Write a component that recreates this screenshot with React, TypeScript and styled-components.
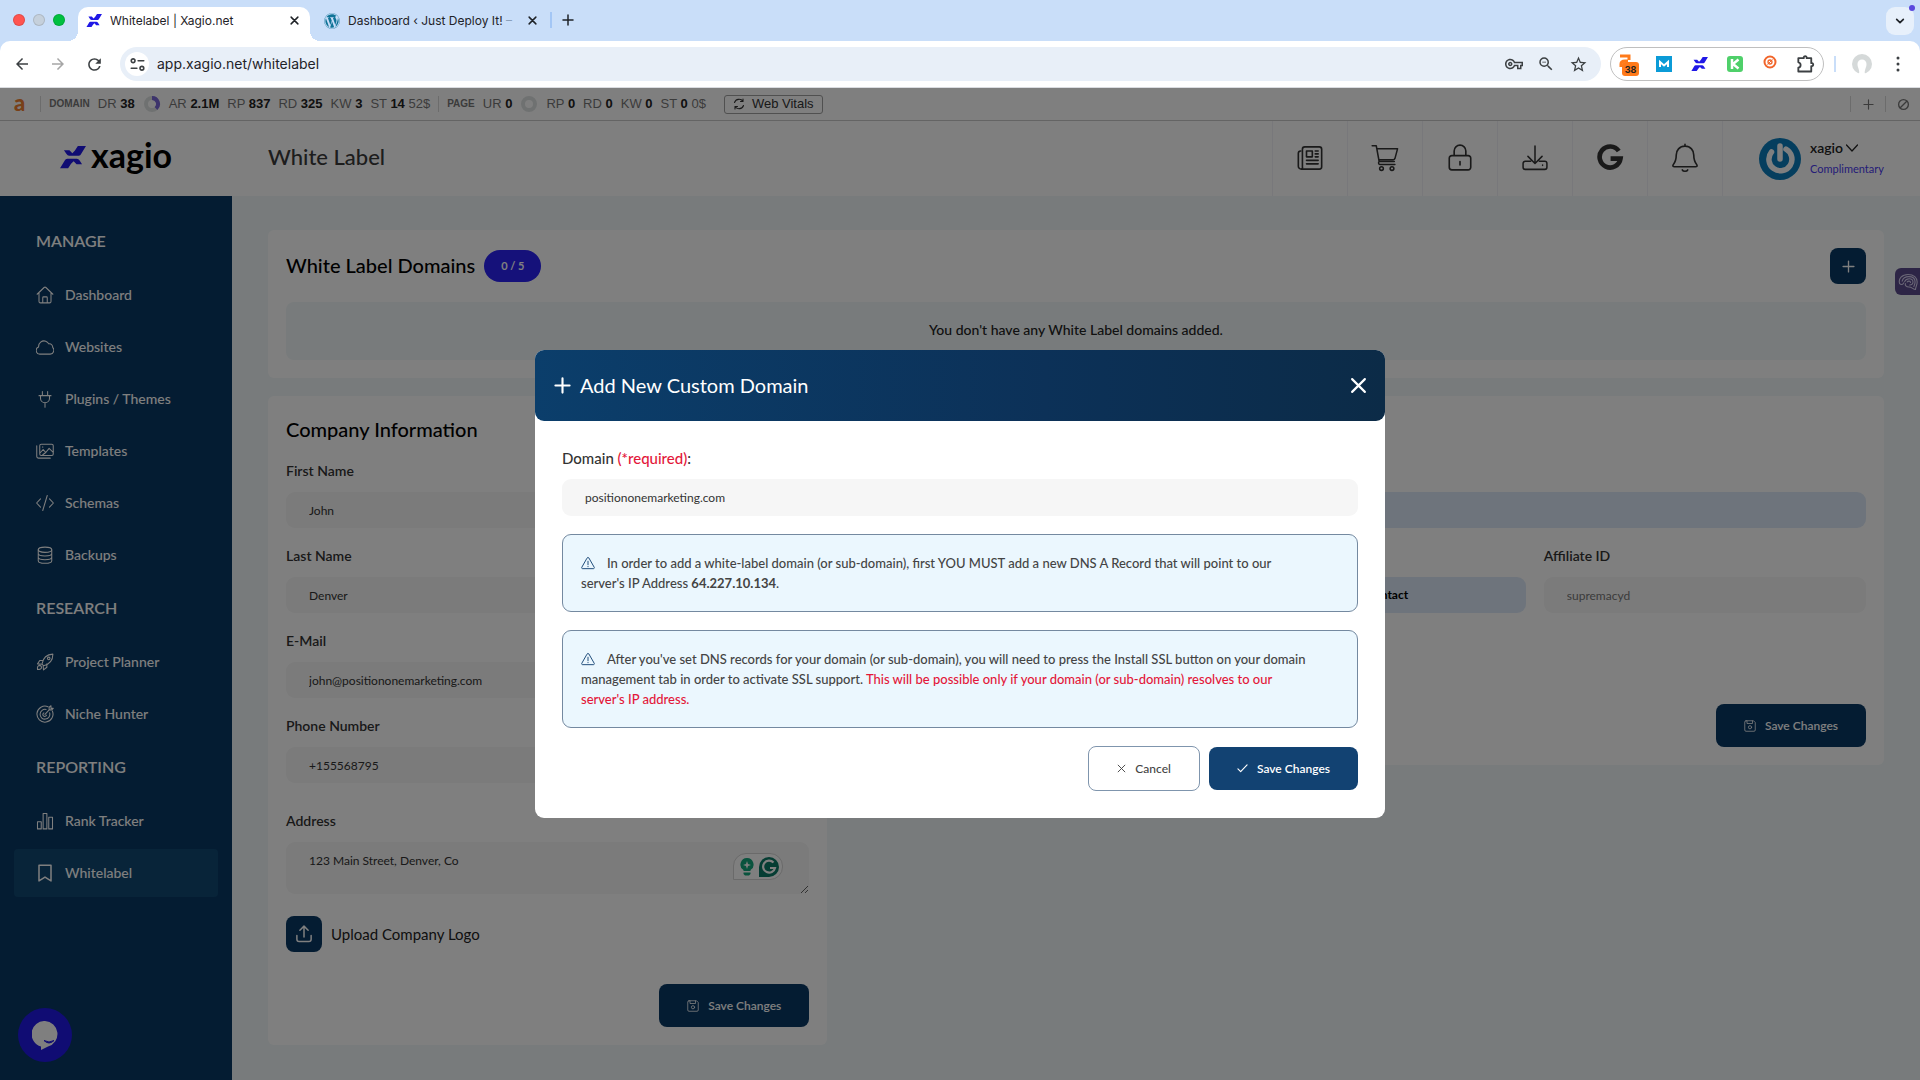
import React from 'react';
import styled, { createGlobalStyle, css } from 'styled-components';
import { FaWordpress } from 'react-icons/fa';
import { MdStarBorder, MdZoomOut, MdOutlineVpnKey, MdArrowBack, MdArrowForward, MdRefresh } from 'react-icons/md';

const sans = '"Lato", "Open Sans", sans-serif';
const ui = '"Inter", "Roboto", sans-serif';
const navy = '#093864';

const GlobalStyle = createGlobalStyle`
  *, *::before, *::after { box-sizing: border-box; }
  body { margin: 0; font-family: ${sans}; font-size: 14px; line-height: 20px; color: #333; background: #fff; }
  button, input, textarea { font: inherit; color: inherit; }
  button { cursor: pointer; padding: 0; border: 0; background: none; }
  a { color: inherit; text-decoration: none; }
  h1, h2, p { margin: 0; }
  svg { flex: none; display: block; }
`;

const Shell = styled.div`
  display: flex;
  flex-direction: column;
  min-height: 100vh;
`;

/* ---------- Browser chrome ---------- */

const TabStrip = styled.div`
  display: flex;
  align-items: flex-end;
  height: 41px;
  padding: 0 6px 0 13px;
  background: #c9def9;
  font-family: ${ui};
  font-size: 12px;
  color: #1f2328;
`;

const Lights = styled.div`
  display: flex;
  gap: 8px;
  height: 40px;
  align-items: center;
  align-self: flex-start;
  margin-right: 13px;
`;

const Light = styled.span<{ $color: string }>`
  width: 12px;
  height: 12px;
  border-radius: 50%;
  background: ${(p) => p.$color};
  box-shadow: inset 0 0 0 1px rgba(0, 0, 0, 0.12);
`;

const Tab = styled.div<{ $active?: boolean }>`
  position: relative;
  display: flex;
  align-items: center;
  gap: 8px;
  width: ${(p) => (p.$active ? '232px' : '240px')};
  height: 34px;
  padding: 0 8px 7px;
  ${(p) => (p.$active
    ? css`
        background: #fff;
        border-radius: 10px 10px 0 0;
        &::before, &::after {
          content: '';
          position: absolute;
          bottom: 0;
          width: 10px;
          height: 10px;
        }
        &::before { left: -10px; background: radial-gradient(circle at 0 0, transparent 10px, #fff 10px); }
        &::after { right: -10px; background: radial-gradient(circle at 100% 0, transparent 10px, #fff 10px); }
      `
    : css`padding-left: 14px; padding-right: 10px;`)}
`;

const TabTitle = styled.span`
  flex: 1;
  overflow: hidden;
  white-space: nowrap;
`;

const TabFade = styled.span`
  color: #8aa0bb;
`;

const TabDivider = styled.span`
  width: 2px;
  height: 16px;
  margin: 0 8px 13px 0;
  background: #a3c6f5;
`;

const IconButton = styled.button<{ $size?: number }>`
  display: grid;
  place-items: center;
  width: ${(p) => p.$size ?? 16}px;
  height: ${(p) => p.$size ?? 16}px;
`;

const NewTab = styled(IconButton)`
  margin-bottom: 13px;
`;

const TabSearch = styled.button`
  position: relative;
  display: grid;
  place-items: center;
  width: 28px;
  height: 28px;
  margin: 0 0 6px auto;
  border-radius: 9px;
  background: #e7f0fb;
  &::after {
    content: '';
    position: absolute;
    top: -2px;
    right: -1px;
    width: 6px;
    height: 6px;
    border-radius: 50%;
    background: #5a48dd;
  }
`;

const ToolbarWrap = styled.div`
  background: #c9def9;
`;

const Toolbar = styled.div`
  display: flex;
  align-items: center;
  height: 47px;
  padding: 0 12px;
  background: #fff;
  border-bottom: 1px solid #dadce0;
  border-radius: 10px 10px 0 0;
  color: #3c4043;
`;

const NavButtons = styled.div`
  display: flex;
  gap: 16px;
  margin-right: 16px;
`;

const AddressBar = styled.div`
  flex: 1;
  display: flex;
  align-items: center;
  height: 34px;
  padding: 0 13px 0 5px;
  border-radius: 17px;
  background: #e8eff8;
`;

const SiteInfo = styled.button`
  display: grid;
  place-items: center;
  width: 24px;
  height: 24px;
  margin-right: 8px;
  border-radius: 50%;
  background: #fff;
`;

const UrlInput = styled.input`
  flex: 1;
  padding: 0;
  border: 0;
  outline: 0;
  background: none;
  font: 14px/20px ${ui};
  color: #1f2328;
`;

const AddressActions = styled.div`
  display: flex;
  gap: 12px;
`;

const Extensions = styled.div`
  display: grid;
  grid-template-columns: repeat(6, 1fr);
  place-items: center;
  width: 214px;
  height: 34px;
  margin-left: 9px;
  border: 1px solid #bfbfbf;
  border-radius: 17px;
`;

const ChromeDivider = styled.span`
  width: 2px;
  height: 16px;
  margin: 0 16px 0 10px;
  background: #c9def9;
`;

const MoreButton = styled(IconButton)`
  margin-left: 16px;
`;

/* ---------- SEO bar ---------- */

const Page = styled.div`
  position: relative;
  flex: 1;
  display: flex;
  flex-direction: column;
`;

const SeoBar = styled.div`
  display: flex;
  align-items: center;
  gap: 8px;
  height: 33px;
  padding: 0 9px 0 14px;
  border-bottom: 1px solid #c8c8c8;
  background: #fff;
  font-family: "Liberation Sans", Arial, sans-serif;
  font-size: 13px;
  color: #777;
  b { color: #222; }
`;

const SeoMark = styled.b`
  && { color: #f08030; }
  font: 900 22px/20px ${sans};
  padding: 0 7px 3px 0;
`;

const SeoDivider = styled.span`
  width: 1px;
  height: 16px;
  background: #d8d8d8;
`;

const SeoCaption = styled.span`
  font-size: 10px;
  font-weight: 700;
`;

const Metric = styled.span`
  white-space: nowrap;
`;

const VitalsButton = styled.button`
  display: flex;
  align-items: center;
  gap: 7px;
  height: 19px;
  margin-left: 10px;
  padding: 0 8px;
  border: 1px solid #a0a0a0;
  border-radius: 3px;
  color: #333;
`;

const SeoTools = styled.div`
  display: flex;
  align-items: center;
  gap: 9px;
  margin-left: auto;
`;

/* ---------- App header ---------- */

const Header = styled.header`
  display: flex;
  height: 75px;
  background: #fff;
`;

const Logo = styled.a`
  display: flex;
  align-items: center;
  gap: 5px;
  width: 232px;
  padding: 0 0 8px 60px;
  font-size: 34px;
  font-weight: 700;
  line-height: 40px;
  color: #000;
`;

const LogoMark = styled.span`
  padding-top: 6px;
`;

const PageTitle = styled.h1`
  flex: 1;
  padding: 23px 0 0 36px;
  font-size: 22px;
  font-weight: 500;
  line-height: 26px;
  color: #3a3a3a;
`;

const HeaderCell = styled.button`
  display: grid;
  place-items: center;
  width: 75px;
  padding-bottom: 2px;
  border-left: 1px solid #f0f0f6;
  color: #333;
`;

const Account = styled.button`
  display: flex;
  align-items: center;
  gap: 9px;
  width: 198px;
  padding-left: 36px;
  border-left: 1px solid #f0f0f6;
  text-align: left;
`;

const AccountName = styled.span`
  display: flex;
  align-items: center;
  gap: 3px;
  font-size: 14px;
  font-weight: 600;
  color: #222;
`;

const AccountPlan = styled.span`
  font-size: 11px;
  color: #4a3aef;
`;

/* ---------- Layout ---------- */

const Body = styled.div`
  flex: 1;
  display: flex;
  background: #f0f7f8;
`;

const Sidebar = styled.nav`
  flex: none;
  width: 232px;
  padding: 16px 14px 0;
  background: ${navy};
  color: #fff;
`;

const NavTitle = styled.div`
  height: 59px;
  padding: 19px 22px 0;
  font-size: 16px;
  font-weight: 600;
`;

const NavList = styled.div`
  display: flex;
  flex-direction: column;
  gap: 4px;
`;

const NavItem = styled.a<{ $active?: boolean }>`
  display: flex;
  align-items: center;
  gap: 11px;
  height: 48px;
  padding: 0 22px;
  border-radius: 4px;
  font-weight: 500;
  background: ${(p) => (p.$active ? '#104873' : 'none')};
`;

const Main = styled.main`
  flex: 1;
  display: flex;
  flex-direction: column;
  gap: 18px;
  padding: 34px 36px;
`;

const Card = styled.section`
  padding: 18px;
  border-radius: 6px;
  background: #fff;
`;

const CardHeader = styled.div`
  display: flex;
  align-items: center;
  gap: 9px;
  margin-bottom: 18px;
`;

const Heading = styled.h2`
  padding-bottom: 2px;
  font-size: 20px;
  font-weight: 500;
  line-height: 30px;
  color: #000;
`;

const CountBadge = styled.span`
  padding: 6px 17px;
  border-radius: 16px;
  background: #2a22f4;
  font-size: 11px;
  font-weight: 700;
  color: #fff;
`;

const SquareButton = styled.button<{ $end?: boolean }>`
  display: grid;
  place-items: center;
  width: 36px;
  height: 36px;
  margin-left: ${(p) => (p.$end ? 'auto' : '0')};
  border-radius: 8px;
  background: ${navy};
  color: #fff;
`;

const EmptyNotice = styled.p`
  padding: 18px 18px 20px;
  border-radius: 8px;
  background: #f0f7f8;
  text-align: center;
  font-weight: 500;
  color: #222;
`;

const Columns = styled.div`
  display: grid;
  grid-template-columns: 7fr 13fr;
  align-items: start;
  gap: 18px;
`;

const Form = styled.form`
  display: grid;
  gap: 18px;
  margin-top: 15px;
`;

const AffiliateForm = styled.form`
  display: grid;
  gap: 18px;
  padding-top: 78px;
`;

const Field = styled.div<{ $spaced?: boolean }>`
  position: relative;
  display: grid;
  gap: 11px;
  margin-top: ${(p) => (p.$spaced ? '10px' : '0')};
`;

const Label = styled.label`
  font-weight: 600;
  color: #333;
`;

const inputStyle = css`
  width: 100%;
  padding: 0 22px 0 23px;
  border: 0;
  outline: 0;
  border-radius: 9px;
  background: #f6f6f6;
  font-size: 12px;
  color: #333;
`;

const TextInput = styled.input<{ $tint?: boolean; $muted?: boolean; $tall?: boolean }>`
  ${inputStyle}
  height: ${(p) => (p.$tall ? '37px' : '36px')};
  ${(p) => p.$tint && css`background: #dde9f8;`}
  ${(p) => p.$muted && css`color: #777;`}
`;

const TextArea = styled.textarea`
  ${inputStyle}
  display: block;
  height: 52px;
  padding-top: 9px;
`;

const WritingTools = styled.div`
  position: absolute;
  right: 26px;
  bottom: 14px;
  display: flex;
  align-items: center;
  gap: 5px;
  height: 27px;
  padding: 0 3px 0 6px;
  border: 1px solid #d4d4d4;
  border-radius: 13px 13px 13px 0;
  background: #fff;
`;

const ToggleButton = styled.button`
  height: 36px;
  border-radius: 9px;
  background: #dde9f8;
  font-size: 12px;
  font-weight: 700;
  color: #000;
`;

const Thirds = styled.div`
  display: grid;
  grid-template-columns: repeat(3, 1fr);
  align-items: end;
  gap: 18px;
`;

const UploadRow = styled.div`
  display: flex;
  align-items: center;
  gap: 9px;
  margin-top: 4px;
  font-size: 15px;
  color: #222;
`;

const Actions = styled.div<{ $top: number }>`
  display: flex;
  justify-content: flex-end;
  align-items: center;
  gap: 9px;
  margin-top: ${(p) => p.$top}px;
`;

const ActionButton = styled.button<{ $variant?: 'outline' | 'bright' }>`
  display: flex;
  align-items: center;
  gap: 9px;
  height: 43px;
  padding: 0 28px;
  border-radius: 8px;
  background: ${(p) => (p.$variant === 'bright' ? '#124272' : navy)};
  font-size: 12px;
  font-weight: 600;
  color: #fff;
  ${(p) => p.$variant === 'outline' && css`
    height: 45px;
    border: 1px solid #7f95ad;
    background: #fff;
    font-weight: 500;
    color: #444;
  `}
`;

const ChatButton = styled.button`
  position: absolute;
  left: 18px;
  bottom: 18px;
  display: grid;
  place-items: center;
  width: 54px;
  height: 54px;
  border-radius: 50%;
  background: #2018e6;
`;

const SideTab = styled.button`
  position: absolute;
  top: 180px;
  right: 0;
  display: grid;
  place-items: center;
  width: 25px;
  height: 27px;
  border-radius: 6px 0 0 6px;
  background: #5b4a8c;
`;

/* ---------- Modal ---------- */

const Backdrop = styled.div`
  position: absolute;
  inset: 0;
  display: grid;
  place-items: center;
  background: rgba(0, 0, 0, 0.5);
`;

const Dialog = styled.div`
  width: 850px;
  max-width: 90%;
  border-radius: 9px;
  background: #fff;
`;

const DialogHeader = styled.div`
  display: flex;
  align-items: center;
  gap: 9px;
  height: 71px;
  padding: 0 19px 1px 19px;
  border-radius: 9px;
  background: linear-gradient(90deg, #0b3e6b, #0c3158 60%, #0c2b47);
  color: #fff;
`;

const DialogTitle = styled.h2`
  flex: 1;
  font-size: 20px;
  font-weight: 400;
  line-height: 26px;
`;

const DialogBody = styled.form`
  display: grid;
  gap: 18px;
  padding: 27px;
`;

const DialogLabel = styled(Label)`
  font-size: 15px;
  font-weight: 500;
`;

const Danger = styled.span`
  color: #e3173a;
`;

const Alert = styled.p`
  padding: 18px 48px 18px 18px;
  border: 1px solid #7489a0;
  border-radius: 9px;
  background: #ebf7fe;
  font-size: 13px;
  font-weight: 500;
  color: #444;
  svg { display: inline-block; margin-right: 12px; vertical-align: -2px; }
`;

/* ---------- Icons ---------- */

type LineProps = { size?: number; w?: number; color?: string; children: React.ReactNode };
const Line = ({ size = 18, w = 1.3, color = 'currentColor', children }: LineProps) => (
  <svg width={size} height={size} viewBox="0 0 24 24" fill="none" stroke={color} strokeWidth={w} strokeLinecap="round" strokeLinejoin="round" aria-hidden="true">
    {children}
  </svg>
);

const Mark = ({ size = 27 }: { size?: number }) => (
  <svg width={size} height={size * 0.86} viewBox="28 44 80 69" fill="#2018e6" aria-hidden="true">
    <path d="M40 57H57L66 66L74 58L83 44H108L93 69Q91 74 86 74H56Q51 74 48 69Z" />
    <path d="M96 100H79L70 91L62 99L53 113H28L43 88Q45 83 50 83H80Q85 83 88 88Z" />
  </svg>
);

const Plus = ({ size, w }: { size: number; w: number }) => <Line size={size} w={w}><path d="M12 2V22M2 12H22" /></Line>;
const Cross = ({ size, w }: { size: number; w: number }) => <Line size={size} w={w}><path d="M3 3L21 21M21 3L3 21" /></Line>;

const Warning = () => (
  <Line size={14} w={1.6} color="#124272">
    <path d="M10.6 3.2a1.7 1.7 0 0 1 2.8 0l9.3 16.2a1.5 1.5 0 0 1-1.3 2.3H2.6a1.5 1.5 0 0 1-1.3-2.3ZM12 9V15M12 18V18.4" />
  </Line>
);

const SaveIcon = () => (
  <Line size={12} w={1.6}>
    <path d="M4 1.5H19L22.5 5V20a2.5 2.5 0 0 1-2.5 2.5H4A2.5 2.5 0 0 1 1.5 20V4A2.5 2.5 0 0 1 4 1.5ZM6 2V7H17V2" />
    <circle cx="12" cy="14.5" r="3.2" />
  </Line>
);

const navIcons: Record<string, React.ReactNode> = {
  Dashboard: <path d="M1.5 11L10.8 2a1.8 1.8 0 0 1 2.4 0L22.5 11M4 9V20.5A2 2 0 0 0 6 22.5H18A2 2 0 0 0 20 20.5V9M9 22V15.5A1 1 0 0 1 10 14.5H14A1 1 0 0 1 15 15.5V22" />,
  Websites: <path d="M5 21.5C-1 21.5-1 13 3.500 12C3 7 8 2.500 13 4.200C15 5 16.300 6.300 17 7.800C21 7.500 22.500 10.500 22.300 12.800C25 15 24 21.500 19 21.500Z" />,
  'Plugins / Themes': <path d="M8.5 2V7M15.5 2V7M4 7.5H20M6 7.5V11A6 6 0 0 0 18 11V7.5M12 17V23" />,
  Templates: <path d="M7 3H21A2 2 0 0 1 23 5V16A2 2 0 0 1 21 18H7A2 2 0 0 1 5 16V5A2 2 0 0 1 7 3ZM1 5V19A2.5 2.5 0 0 0 3.5 21.5H19M5 15L9.5 10L13 14L17.5 8.5L23 14M9 17L13 14M9 6.5V7" />,
  Schemas: <path d="M6 6.5L0.8 12L6 17.5M18 6.5L23.2 12L18 17.5M15 2L9 22" />,
  Backups: <><ellipse cx="12" cy="5" rx="9" ry="3.5" /><path d="M3 5V19.5C3 21.5 7 23 12 23S21 21.5 21 19.5V5M3 10C3 12 7 13.3 12 13.3S21 12 21 10M3 15C3 17 7 18.3 12 18.3S21 17 21 15" /></>,
  'Project Planner': <path d="M8 14.5C9 9 13 2 22.5 1.5C22.5 11 15.5 15.5 10 17ZM9.5 10H5L2 14.5L7.5 15M14.5 14.5V19L10 22.5L9.5 17M2 22C1.5 19 2.5 16.5 5 16.5C8 17 8 20 6 21.3C4.5 22 3 22 2 22M17 5.5A1.7 1.7 0 1 1 16.9 5.5Z" />,
  'Niche Hunter': <path d="M16 2.3A10.7 10.7 0 1 0 21.8 8M13.5 6A6.5 6.5 0 1 0 18.2 10.5M12 12.5L17.5 6.5M17.5 6.5V3L20 1V4.5H23L21 6.5ZM10.5 10.5A2.5 2.5 0 1 0 14 13.5" />,
  'Rank Tracker': <path d="M2 13H7V22.5H2ZM9.5 2H14.5V22.5H9.5ZM17 7H22V22.5H17Z" />,
  Whitelabel: <path d="M4 1.5H20V22.5L12 17.5L4 22.5Z" />,
};

const headerItems: { label: string; icon: React.ReactNode }[] = [
  { label: 'News', icon: <Line size={28} w={1.4}><path d="M7.5 2.5H20A2 2 0 0 1 22 4.5V19.5A2 2 0 0 1 20 21.5H4.5A2.5 2.5 0 0 1 2 19V8A2 2 0 0 1 4 6M5.5 19.5V4.5A2 2 0 0 1 7.5 2.5M5.5 19.5A1.5 1.5 0 0 1 4.5 21.5M9 6H14V11H9ZM16.5 6H19M16.5 8.5H19M16.5 11H19M9 14H19M9 17H19" /></Line> },
  { label: 'Cart', icon: <Line size={28} w={1.3}><path d="M1 1.5H4.5L7 15H20M5.2 4H22.8L20.5 12.5Q20.2 13.5 19 13.5H6.7M7 15C6 16 6.5 17.5 8 17.5H20.5" /><circle cx="9" cy="21" r="1.6" /><circle cx="18" cy="21" r="1.6" /></Line> },
  { label: 'Security', icon: <Line size={28} w={1.4}><path d="M5 10H19A2.2 2.2 0 0 1 21.2 12.2V20A2.2 2.2 0 0 1 19 22.2H5A2.2 2.2 0 0 1 2.8 20V12.2A2.2 2.2 0 0 1 5 10ZM7 10V6A5 5 0 0 1 17 6V10M12 15V18" /></Line> },
  { label: 'Downloads', icon: <Line size={26} w={1.4}><path d="M12 1V16.5M5.5 10.5L12 17L18.5 10.5M8 15H3A2 2 0 0 0 1 17V20.500A2 2 0 0 0 3 22.500H21A2 2 0 0 0 23 20.500V17A2 2 0 0 0 21 15H16M19 18.500V18.800" /></Line> },
  { label: 'Google', icon: <Line size={28} w={4}><path d="M19.5 6A9 9 0 1 0 21 12.5H12.5" strokeLinecap="butt" strokeLinejoin="miter" /></Line> },
  { label: 'Notifications', icon: <Line size={30} w={1.3}><path d="M12 1V2.5M12 2.5C7.5 2.5 5 6 5 9.5C5 14 4 15.5 2.5 17.5C2 18.5 2.5 19 3.5 19H20.5C21.5 19 22 18.5 21.5 17.5C20 15.5 19 14 19 9.5C19 6 16.5 2.5 12 2.5ZM9.8 21.5C10.5 23 13.5 23 14.2 21.5" /></Line> },
];

const navGroups = [
  { title: 'MANAGE', items: ['Dashboard', 'Websites', 'Plugins / Themes', 'Templates', 'Schemas', 'Backups'] },
  { title: 'RESEARCH', items: ['Project Planner', 'Niche Hunter'] },
  { title: 'REPORTING', items: ['Rank Tracker', 'Whitelabel'] },
];

const companyFields = [
  { id: 'first-name', label: 'First Name', value: 'John' },
  { id: 'last-name', label: 'Last Name', value: 'Denver' },
  { id: 'email', label: 'E-Mail', value: 'john@positiononemarketing.com' },
  { id: 'phone', label: 'Phone Number', value: '+155568795' },
];

const domainMetrics: [string, string, string?][] = [['AR', '2.1M'], ['RP', '837'], ['RD', '325'], ['KW', '3'], ['ST', '14', '52$']];
const pageMetrics: [string, string, string?][] = [['RP', '0'], ['RD', '0'], ['KW', '0'], ['ST', '0', '0$']];

const Donut = ({ filled }: { filled?: boolean }) => (
  <svg width="18" height="16" viewBox="0 0 18 16" fill="none" strokeWidth="4" aria-hidden="true">
    <circle cx="9" cy="8" r="6" stroke="#dfe3e3" />
    {filled && <path d="M9 2A6 6 0 0 1 13 12.5" stroke="#7a68d8" />}
  </svg>
);

const MetricText = ({ data: [name, value, extra] }: { data: [string, string, string?] }) => (
  <Metric>{name} <b>{value}</b>{extra ? ` ${extra}` : ''}</Metric>
);

/* ---------- Sections ---------- */

const BrowserChrome = () => (
  <>
    <TabStrip>
      <Lights><Light $color="#ff5450" /><Light $color="#c5d0dc" /><Light $color="#00c040" /></Lights>
      <Tab $active>
        <Mark size={16} />
        <TabTitle>Whitelabel | Xagio.net</TabTitle>
        <IconButton aria-label="Close tab"><Cross size={9} w={4} /></IconButton>
      </Tab>
      <Tab>
        <FaWordpress size={16} color="#0f7397" />
        <TabTitle>Dashboard ‹ Just Deploy It! <TabFade>–</TabFade></TabTitle>
        <IconButton aria-label="Close tab"><Cross size={9} w={4} /></IconButton>
      </Tab>
      <TabDivider />
      <NewTab aria-label="New tab"><Plus size={12} w={3} /></NewTab>
      <TabSearch aria-label="Search tabs"><Line size={10} w={4}><path d="M4 8L12 16L20 8" /></Line></TabSearch>
    </TabStrip>
    <ToolbarWrap>
      <Toolbar>
        <NavButtons>
          <IconButton $size={20} aria-label="Back"><MdArrowBack size={18} /></IconButton>
          <IconButton $size={20} aria-label="Forward"><MdArrowForward size={18} color="#a6a6a6" /></IconButton>
          <IconButton $size={20} aria-label="Reload"><MdRefresh size={19} /></IconButton>
        </NavButtons>
        <AddressBar>
          <SiteInfo aria-label="Site information">
            <Line size={15} w={2.6}><circle cx="5" cy="6" r="3" /><path d="M13 6H22M2 18H11" /><circle cx="19" cy="18" r="3" /></Line>
          </SiteInfo>
          <UrlInput aria-label="Address" defaultValue="app.xagio.net/whitelabel" />
          <AddressActions>
            <IconButton $size={20} aria-label="Passwords"><MdOutlineVpnKey size={18} /></IconButton>
            <IconButton $size={20} aria-label="Zoom"><MdZoomOut size={18} /></IconButton>
            <IconButton $size={20} aria-label="Bookmark"><MdStarBorder size={19} /></IconButton>
          </AddressActions>
        </AddressBar>
        <Extensions>
          <svg width="20" height="24" viewBox="0 0 20 24" aria-hidden="true">
            <path d="M1 4H10V8M2 15V12Q2 9 6 9H9" fill="none" stroke="#ff7a1a" strokeWidth="3" />
            <rect x="3" y="10" width="17" height="14" rx="3" fill="#ff7a1a" />
            <text x="11.500" y="20.500" textAnchor="middle" fontFamily="Inter" fontSize="9" fontWeight="700" fill="#222">38</text>
          </svg>
          <svg width="16" height="16" viewBox="0 0 16 16" aria-hidden="true"><rect width="16" height="16" fill="#0b9bd7" /><path d="M4 11V6L8 9.5L12 6V11" fill="none" stroke="#fff" strokeWidth="2" /></svg>
          <Mark size={17} />
          <svg width="16" height="16" viewBox="0 0 16 16" aria-hidden="true"><rect width="16" height="16" rx="3" fill="#4fd06a" /><path d="M5 3V13M11.5 3.5L6 8L11.5 12.5" fill="none" stroke="#fff" strokeWidth="2.5" /></svg>
          <svg width="14" height="18" viewBox="0 0 14 18" fill="none" stroke="#f1652a" aria-hidden="true"><circle cx="7" cy="7" r="5.5" strokeWidth="2" /><circle cx="7" cy="7" r="2" strokeWidth="1.3" /><path d="M4.5 9.5L9.5 4.5" /></svg>
          <Line size={20} w={2.2}><path d="M4 5H10.5V4A1.800 1.800 0 0 1 14 4V5H19.500V11H20.500A1.800 1.800 0 0 1 20.500 14.500H19.500V21H4V16.500A3.300 3.300 0 0 0 4 10Z" /></Line>
        </Extensions>
        <ChromeDivider />
        <svg width="20" height="20" viewBox="0 0 20 20" aria-hidden="true"><circle cx="10" cy="10" r="10" fill="#d5d9d9" /><path d="M7 20C8 16 5.5 14 5.5 10A4.5 4.5 0 0 1 14.5 10C14.5 14 12 16 13 20Z" fill="#fff" /></svg>
        <MoreButton $size={20} aria-label="Menu"><svg width="4" height="16" viewBox="0 0 4 16" fill="#3c4043"><circle cx="2" cy="2" r="1.5" /><circle cx="2" cy="8" r="1.5" /><circle cx="2" cy="14" r="1.5" /></svg></MoreButton>
      </Toolbar>
    </ToolbarWrap>
  </>
);

const SeoToolbar = () => (
  <SeoBar>
    <SeoMark>a</SeoMark>
    <SeoDivider />
    <SeoCaption>DOMAIN</SeoCaption>
    <MetricText data={['DR', '38']} />
    <Donut filled />
    {domainMetrics.map((m) => <MetricText key={m[0]} data={m} />)}
    <SeoDivider />
    <SeoCaption>PAGE</SeoCaption>
    <MetricText data={['UR', '0']} />
    <Donut />
    {pageMetrics.map((m) => <MetricText key={m[0]} data={m} />)}
    <VitalsButton><Line size={12} w={2.2}><path d="M20 7A9.5 9.5 0 0 0 3 9M4 17A9.5 9.5 0 0 0 21 15M20 2V7H15M4 22V17H9" /></Line>Web Vitals</VitalsButton>
    <SeoTools>
      <SeoDivider />
      <IconButton aria-label="Add"><Plus size={11} w={2.5} /></IconButton>
      <SeoDivider />
      <IconButton aria-label="Disable"><Line size={13} w={2.5}><circle cx="12" cy="12" r="9" /><path d="M6 18L18 6" /></Line></IconButton>
    </SeoTools>
  </SeoBar>
);

const AppHeader = () => (
  <Header>
    <Logo href="#"><LogoMark><Mark size={26} /></LogoMark>xagio</Logo>
    <PageTitle>White Label</PageTitle>
    {headerItems.map((item) => <HeaderCell key={item.label} aria-label={item.label}>{item.icon}</HeaderCell>)}
    <Account>
      <svg width="42" height="42" viewBox="0 0 42 42" fill="none" aria-hidden="true">
        <circle cx="21" cy="21" r="21" fill="#0a7dbd" />
        <path d="M12.5 14A11.5 11.5 0 1 0 27 11.2M21 8V21" stroke="#fff" strokeWidth="5.5" strokeLinecap="round" />
      </svg>
      <span>
        <AccountName>xagio <Line size={12} w={2.5}><path d="M1 6L12 18L23 6" /></Line></AccountName>
        <AccountPlan>Complimentary</AccountPlan>
      </span>
    </Account>
  </Header>
);

const SaveButton = () => <ActionButton type="button"><SaveIcon />Save Changes</ActionButton>;

const CompanyCard = () => (
  <Card>
    <Heading>Company Information</Heading>
    <Form>
      {companyFields.map((f) => (
        <Field key={f.id}>
          <Label htmlFor={f.id}>{f.label}</Label>
          <TextInput id={f.id} defaultValue={f.value} />
        </Field>
      ))}
      <Field $spaced>
        <Label htmlFor="address">Address</Label>
        <TextArea id="address" defaultValue="123 Main Street, Denver, Co" />
        <WritingTools>
          <svg width="14" height="18" viewBox="0 0 14 18" aria-hidden="true"><path d="M7 0A6.5 6.5 0 0 1 10.5 12V13H3.5V12A6.5 6.5 0 0 1 7 0ZM3.5 14.5H10.5V16L9 17.5H5L3.5 16Z" fill="#12a67c" /><path d="M7 3L8 6L11 7L8 8L7 11L6 8L3 7L6 6Z" fill="#fff" /></svg>
          <svg width="20" height="20" viewBox="0 0 20 20" aria-hidden="true"><path d="M10 0A10 10 0 1 1 10 20H0V10A10 10 0 0 1 10 0Z" fill="#0b7a66" /><path d="M14.5 5.5A6 6 0 1 0 16 11H11" fill="none" stroke="#fff" strokeWidth="2.2" /></svg>
        </WritingTools>
      </Field>
      <UploadRow>
        <SquareButton type="button" aria-label="Upload Company Logo">
          <Line size={18} w={2}><path d="M12 16V2M6.5 7L12 1.5L17.5 7M2.5 14V19A3 3 0 0 0 5.5 22H18.5A3 3 0 0 0 21.5 19V14" /></Line>
        </SquareButton>
        Upload Company Logo
      </UploadRow>
      <Actions $top={14}><SaveButton /></Actions>
    </Form>
  </Card>
);

const AffiliateCard = () => (
  <Card>
    <AffiliateForm>
      <TextInput aria-label="Support link" $tint />
      <Thirds>
        <TextInput aria-label="Support name" />
        <ToggleButton type="button">Affiliate Contact</ToggleButton>
        <Field>
          <Label htmlFor="affiliate-id">Affiliate ID</Label>
          <TextInput id="affiliate-id" defaultValue="supremacyd" $muted />
        </Field>
      </Thirds>
      <Actions $top={73}><SaveButton /></Actions>
    </AffiliateForm>
  </Card>
);

const DomainDialog = () => (
  <Backdrop>
    <Dialog role="dialog" aria-labelledby="dialog-title">
      <DialogHeader>
        <Plus size={17} w={3} />
        <DialogTitle id="dialog-title">Add New Custom Domain</DialogTitle>
        <IconButton aria-label="Close"><Cross size={17} w={3} /></IconButton>
      </DialogHeader>
      <DialogBody>
        <Field>
          <DialogLabel htmlFor="domain">Domain <Danger>(*required)</Danger>:</DialogLabel>
          <TextInput id="domain" defaultValue="positiononemarketing.com" $tall />
        </Field>
        <Alert>
          <Warning />In order to add a white-label domain (or sub-domain), first YOU MUST add a new DNS A Record that will point to our server's IP Address <b>64.227.10.134</b>.
        </Alert>
        <Alert>
          <Warning />After you've set DNS records for your domain (or sub-domain), you will need to press the Install SSL button on your domain management tab in order to activate SSL support. <Danger>This will be possible only if your domain (or sub-domain) resolves to our server's IP address.</Danger>
        </Alert>
        <Actions $top={0}>
          <ActionButton type="button" $variant="outline"><Cross size={9} w={2.5} />Cancel</ActionButton>
          <ActionButton type="button" $variant="bright"><Line size={11} w={2.5}><path d="M2 13L8 19L22 4" /></Line>Save Changes</ActionButton>
        </Actions>
      </DialogBody>
    </Dialog>
  </Backdrop>
);

export default function App() {
  return (
    <Shell>
      <GlobalStyle />
      <BrowserChrome />
      <Page>
        <SeoToolbar />
        <AppHeader />
        <Body>
          <Sidebar>
            {navGroups.map((group) => (
              <React.Fragment key={group.title}>
                <NavTitle>{group.title}</NavTitle>
                <NavList>
                  {group.items.map((name) => (
                    <NavItem key={name} href="#" $active={name === 'Whitelabel'}>
                      <Line size={18} w={name === 'Whitelabel' ? 2 : 1.4}>{navIcons[name]}</Line>
                      {name}
                    </NavItem>
                  ))}
                </NavList>
              </React.Fragment>
            ))}
          </Sidebar>
          <Main>
            <Card>
              <CardHeader>
                <Heading>White Label Domains</Heading>
                <CountBadge>0 / 5</CountBadge>
                <SquareButton $end aria-label="Add domain"><Plus size={13} w={2.5} /></SquareButton>
              </CardHeader>
              <EmptyNotice>You don't have any White Label domains added.</EmptyNotice>
            </Card>
            <Columns>
              <CompanyCard />
              <AffiliateCard />
            </Columns>
          </Main>
        </Body>
        <ChatButton aria-label="Open chat">
          <svg width="26" height="29" viewBox="0 0 26 29" aria-hidden="true"><path d="M13 0A13 13 0 0 1 16 25.5L9 29V25.5A13 13 0 0 1 13 0Z" fill="#fff" /><path d="M12 19.5Q17 22.5 22 19.5Q17 24.5 12 19.5Z" fill="#2018e6" stroke="#2018e6" /></svg>
        </ChatButton>
        <SideTab aria-label="Assistant">
          <Line size={20} w={1.3} color="#d6cfee"><path d="M2 14C0 8 5 3 12 3C19 3 23 7 23 12C23 16 21 18 21 21C18 21 17 18 13 18C10 18 8 16 9 14M2 14C4 16 6 15 7 13M5 11C6 7 9 5.5 13 5.5C18 5.5 20.5 8.5 20.5 12C20.5 14 19.5 16 19 17.5M8 11.5C9 9 11 8 13.5 8C16.5 8 18 10 18 12S16.5 15.5 14 15.5M11 12C12 10.5 15 10.5 15 12.5" /></Line>
        </SideTab>
        <DomainDialog />
      </Page>
    </Shell>
  );
}
